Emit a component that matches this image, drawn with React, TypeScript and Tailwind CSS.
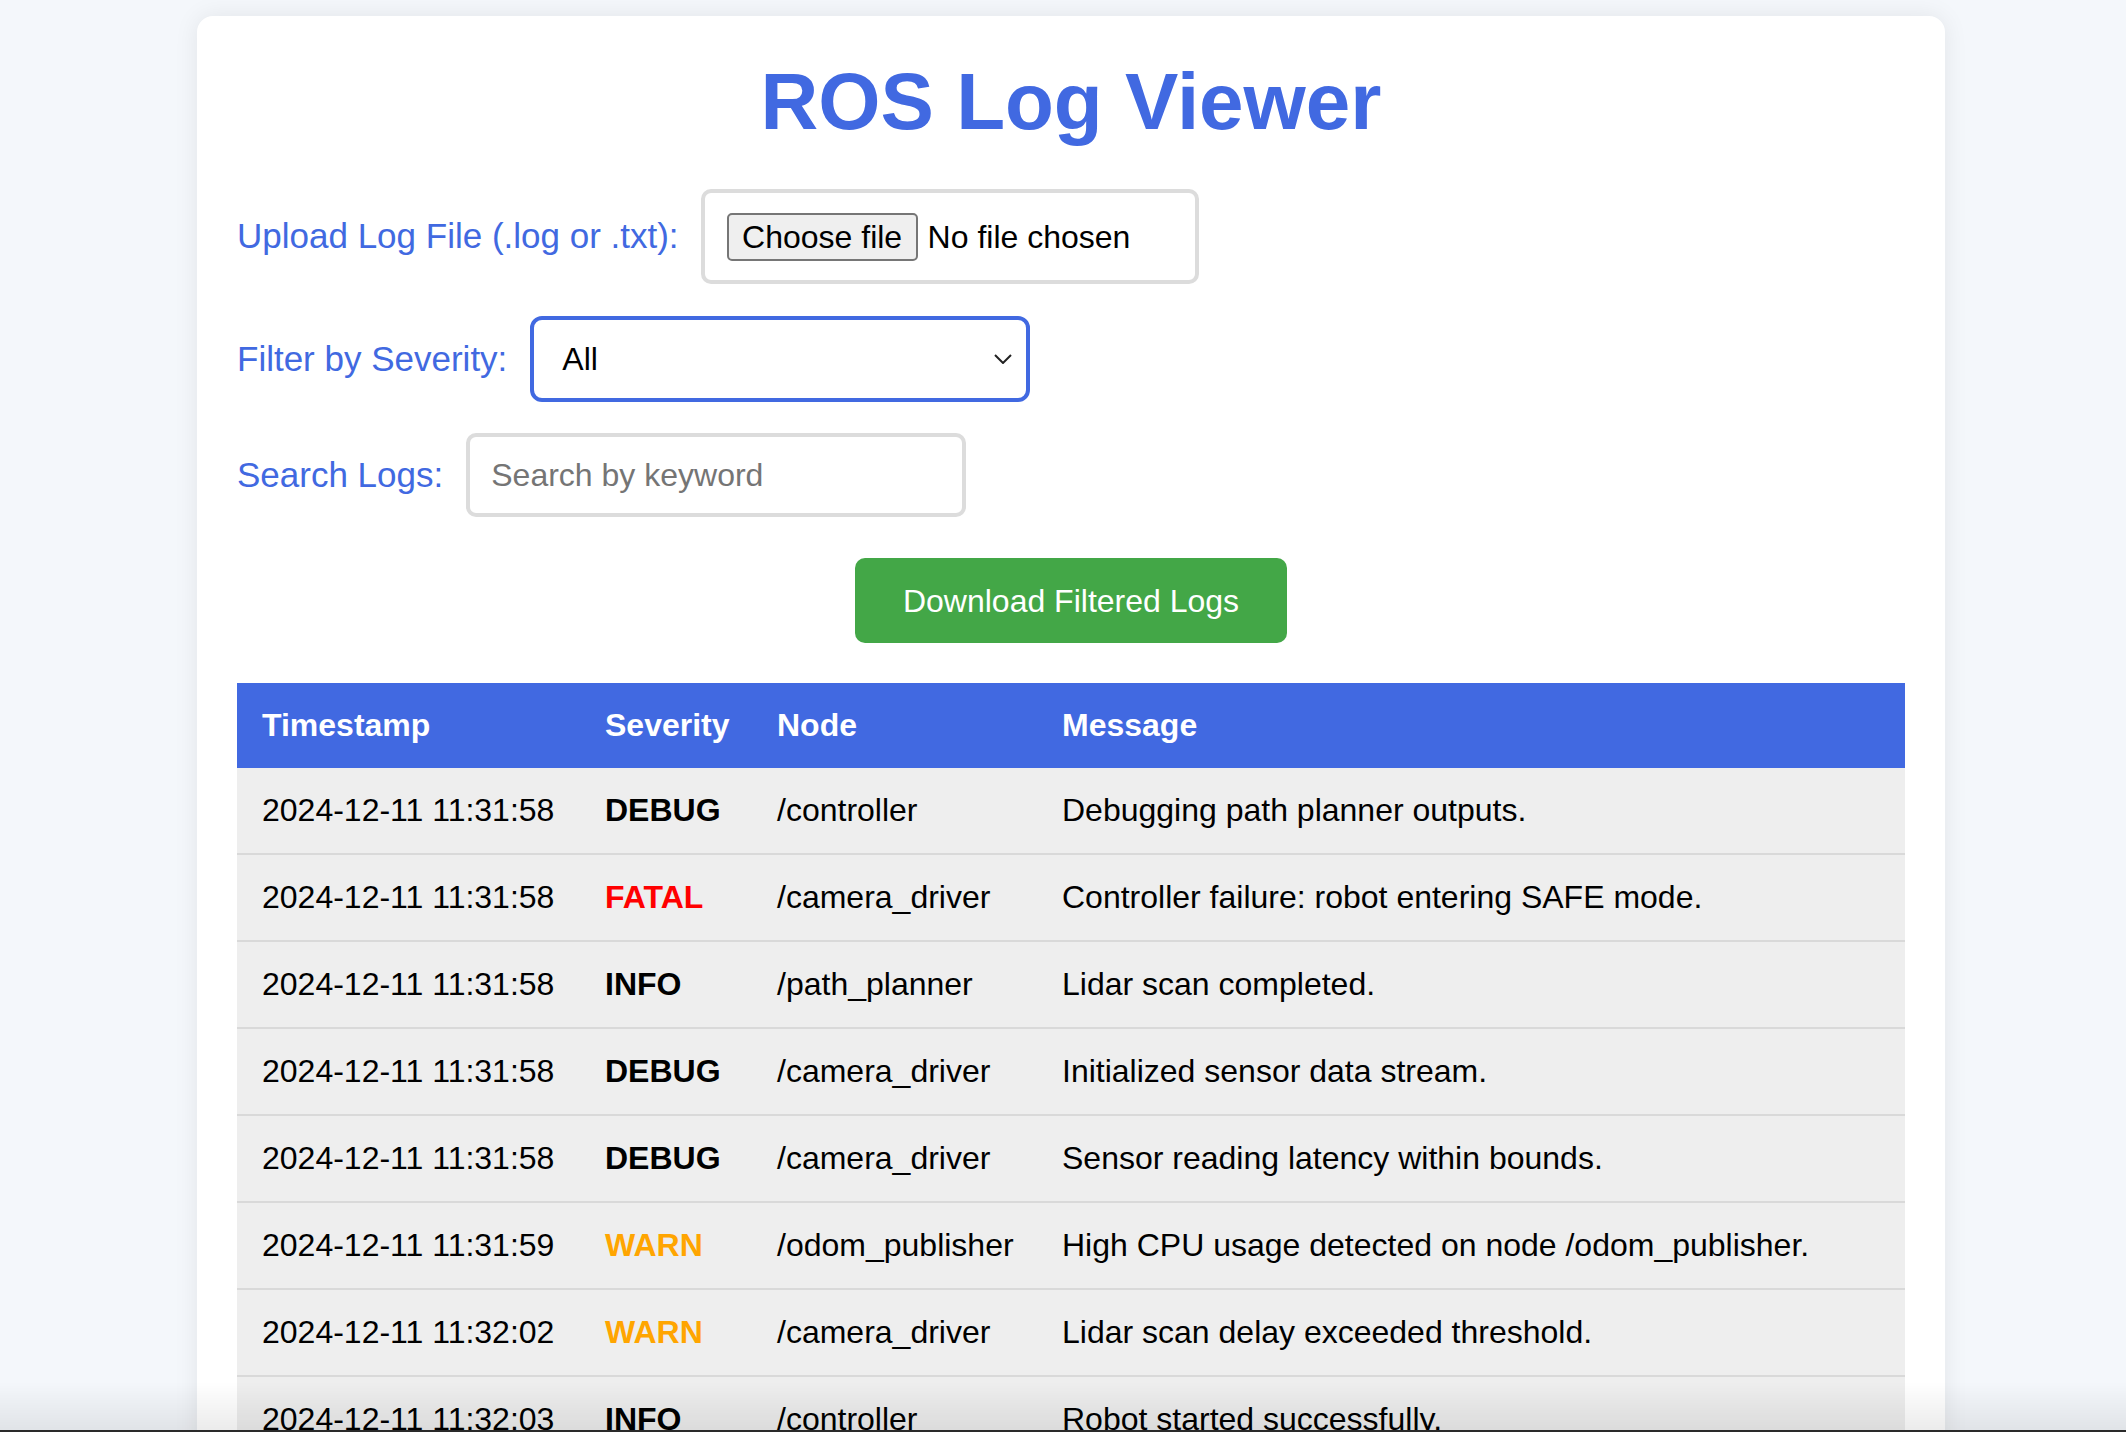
const logs = [
  { ts: '2024-12-11 11:31:58', sev: 'DEBUG', node: '/controller', msg: 'Debugging path planner outputs.' },
  { ts: '2024-12-11 11:31:58', sev: 'FATAL', node: '/camera_driver', msg: 'Controller failure: robot entering SAFE mode.' },
  { ts: '2024-12-11 11:31:58', sev: 'INFO', node: '/path_planner', msg: 'Lidar scan completed.' },
  { ts: '2024-12-11 11:31:58', sev: 'DEBUG', node: '/camera_driver', msg: 'Initialized sensor data stream.' },
  { ts: '2024-12-11 11:31:58', sev: 'DEBUG', node: '/camera_driver', msg: 'Sensor reading latency within bounds.' },
  { ts: '2024-12-11 11:31:59', sev: 'WARN', node: '/odom_publisher', msg: 'High CPU usage detected on node /odom_publisher.' },
  { ts: '2024-12-11 11:32:02', sev: 'WARN', node: '/camera_driver', msg: 'Lidar scan delay exceeded threshold.' },
  { ts: '2024-12-11 11:32:03', sev: 'INFO', node: '/controller', msg: 'Robot started successfully.' },
  { ts: '2024-12-11 11:32:05', sev: 'ERROR', node: '/path_planner', msg: 'Failed to compute path to goal.' },
];

const sevClass: Record<string, string> = {
  DEBUG: 'text-black',
  INFO: 'text-black',
  WARN: 'text-[#ffa500]',
  FATAL: 'text-[#ff0000]',
  ERROR: 'text-[#ff0000]',
};

export default function App() {
  return (
    <div className="relative min-h-screen bg-[#f4f7fb] pt-[16px] pb-[40px] font-['Liberation_Sans',Arial,sans-serif] text-black">
      <div className="ml-[197px] w-[1748px] rounded-[16px] bg-white px-[40px] pt-[40px] pb-[40px] shadow-[0_0_24px_rgba(0,0,0,0.08)]">
        <h1 className="text-center text-[80px] font-bold leading-[92px] text-[#4169e1]">ROS Log Viewer</h1>

        {/* upload */}
        <div className="mt-[41px] flex items-center gap-[22px]">
          <label className="text-[35px] text-[#4169e1]">Upload Log File (.log or .txt):</label>
          <div className="flex h-[95px] w-[498px] items-center rounded-[10px] border-[4px] border-[#dcdcdc] pl-[22px]">
            <div className="flex h-[48px] w-[191px] items-center justify-center rounded-[5px] border-2 border-[#767676] bg-[#efefef] text-[32px]">
              Choose file
            </div>
            <span className="ml-[10px] text-[32px]">No file chosen</span>
          </div>
        </div>

        {/* severity */}
        <div className="mt-[32px] flex items-center gap-[23px]">
          <label className="text-[35px] text-[#4169e1]">Filter by Severity:</label>
          <div className="flex h-[86px] w-[500px] items-center justify-between rounded-[12px] border-[4px] border-[#4169e1] pl-[28px] pr-[14px]">
            <span className="text-[32px]">All</span>
            <svg width="18" height="10" viewBox="0 0 18 10" fill="none" stroke="#222" strokeWidth="2">
              <path d="M1 1l8 8 8-8" />
            </svg>
          </div>
        </div>

        {/* search */}
        <div className="mt-[31px] flex items-center gap-[23px]">
          <label className="text-[35px] text-[#4169e1]">Search Logs:</label>
          <div className="flex h-[84px] w-[500px] items-center rounded-[10px] border-[4px] border-[#dcdcdc] pl-[21px]">
            <span className="text-[32px] text-[#757575]">Search by keyword</span>
          </div>
        </div>

        <div className="mt-[41px] flex justify-center">
          <button className="h-[85px] w-[432px] rounded-[10px] bg-[#43a747] text-[32px] text-white">
            Download Filtered Logs
          </button>
        </div>

        <table className="mt-[40px] w-full table-fixed text-[32px] leading-[37px]">
          <colgroup>
            <col className="w-[343px]" />
            <col className="w-[172px]" />
            <col className="w-[285px]" />
            <col />
          </colgroup>
          <thead>
            <tr className="bg-[#4169e1] text-left text-white">
              <th className="px-[25px] py-[24px] font-bold">Timestamp</th>
              <th className="px-[25px] py-[24px] font-bold">Severity</th>
              <th className="px-[25px] py-[24px] font-bold">Node</th>
              <th className="px-[25px] py-[24px] font-bold">Message</th>
            </tr>
          </thead>
          <tbody>
            {logs.map((l, i) => (
              <tr key={i} className="border-b-2 border-[#d9d9d9] bg-[#eeeeee]">
                <td className="px-[25px] py-[24px] whitespace-nowrap">{l.ts}</td>
                <td className={`px-[25px] py-[24px] font-bold ${sevClass[l.sev]}`}>{l.sev}</td>
                <td className="px-[25px] py-[24px] whitespace-nowrap">{l.node}</td>
                <td className="px-[25px] py-[24px]">{l.msg}</td>
              </tr>
            ))}
          </tbody>
        </table>
      </div>

      {/* window bottom edge */}
      <div className="pointer-events-none fixed inset-x-0 bottom-0 h-[50px] bg-linear-to-b from-transparent to-black/[0.08]" />
      <div className="pointer-events-none fixed inset-x-0 bottom-0 h-[2px] bg-[#2a2a2a]" />
    </div>
  );
}
